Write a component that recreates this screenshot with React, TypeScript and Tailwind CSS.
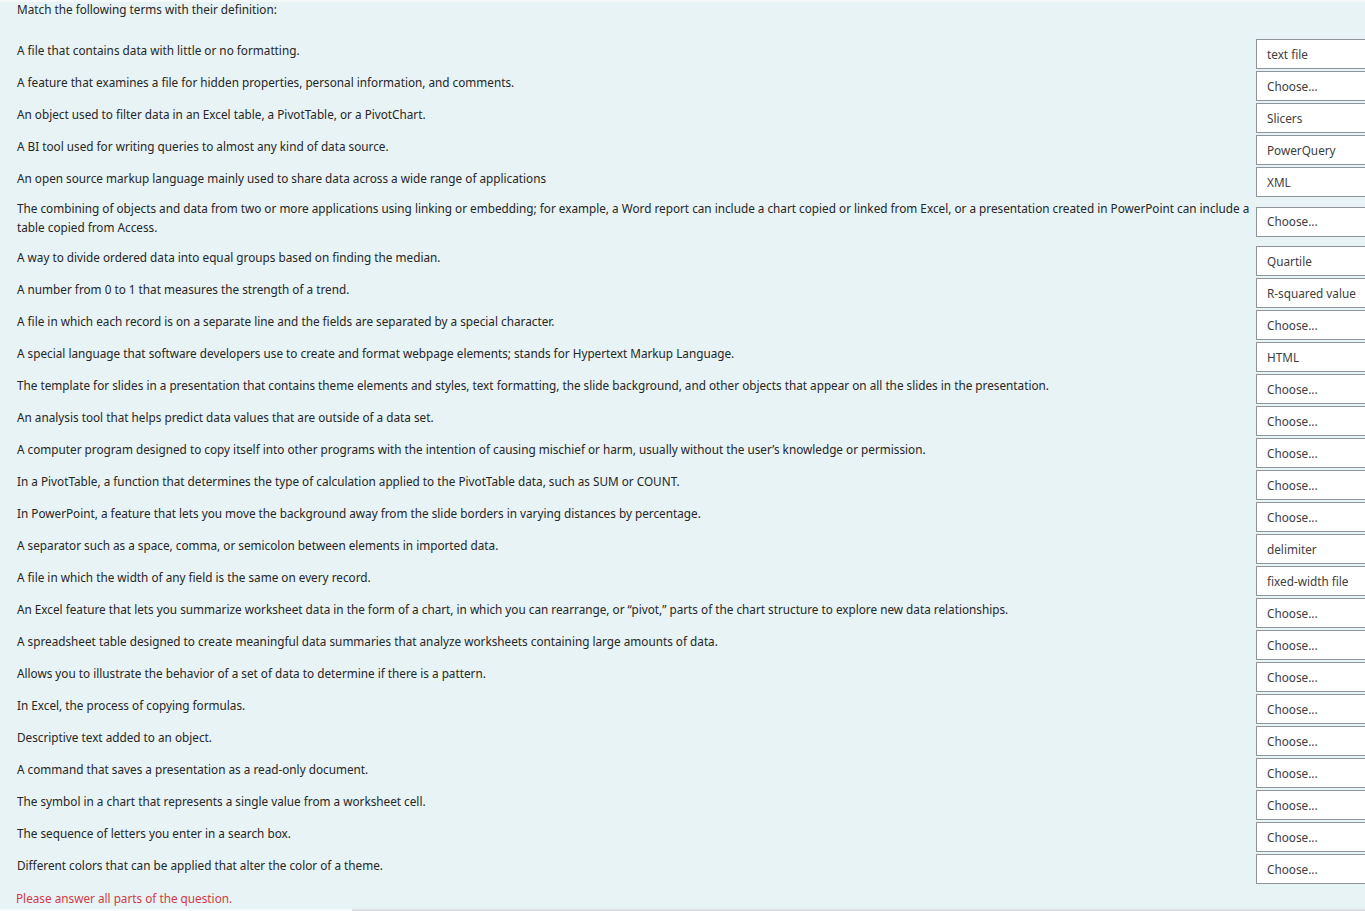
import React from 'react';

type Row = { text: string; answer: string };

const rows: Row[] = [
  { text: 'A file that contains data with little or no formatting.', answer: 'text file' },
  { text: 'A feature that examines a file for hidden properties, personal information, and comments.', answer: 'Choose...' },
  { text: 'An object used to filter data in an Excel table, a PivotTable, or a PivotChart.', answer: 'Slicers' },
  { text: 'A BI tool used for writing queries to almost any kind of data source.', answer: 'PowerQuery' },
  { text: 'An open source markup language mainly used to share data across a wide range of applications', answer: 'XML' },
  {
    text: 'The combining of objects and data from two or more applications using linking or embedding; for example, a Word report can include a chart copied or linked from Excel, or a presentation created in PowerPoint can include a table copied from Access.',
    answer: 'Choose...',
  },
  { text: 'A way to divide ordered data into equal groups based on finding the median.', answer: 'Quartile' },
  { text: 'A number from 0 to 1 that measures the strength of a trend.', answer: 'R-squared value' },
  { text: 'A file in which each record is on a separate line and the fields are separated by a special character.', answer: 'Choose...' },
  { text: 'A special language that software developers use to create and format webpage elements; stands for Hypertext Markup Language.', answer: 'HTML' },
  { text: 'The template for slides in a presentation that contains theme elements and styles, text formatting, the slide background, and other objects that appear on all the slides in the presentation.', answer: 'Choose...' },
  { text: 'An analysis tool that helps predict data values that are outside of a data set.', answer: 'Choose...' },
  { text: 'A computer program designed to copy itself into other programs with the intention of causing mischief or harm, usually without the user\u2019s knowledge or permission.', answer: 'Choose...' },
  { text: 'In a PivotTable, a function that determines the type of calculation applied to the PivotTable data, such as SUM or COUNT.', answer: 'Choose...' },
  { text: 'In PowerPoint, a feature that lets you move the background away from the slide borders in varying distances by percentage.', answer: 'Choose...' },
  { text: 'A separator such as a space, comma, or semicolon between elements in imported data.', answer: 'delimiter' },
  { text: 'A file in which the width of any field is the same on every record.', answer: 'fixed-width file' },
  { text: 'An Excel feature that lets you summarize worksheet data in the form of a chart, in which you can rearrange, or \u201cpivot,\u201d parts of the chart structure to explore new data relationships.', answer: 'Choose...' },
  { text: 'A spreadsheet table designed to create meaningful data summaries that analyze worksheets containing large amounts of data.', answer: 'Choose...' },
  { text: 'Allows you to illustrate the behavior of a set of data to determine if there is a pattern.', answer: 'Choose...' },
  { text: 'In Excel, the process of copying formulas.', answer: 'Choose...' },
  { text: 'Descriptive text added to an object.', answer: 'Choose...' },
  { text: 'A command that saves a presentation as a read-only document.', answer: 'Choose...' },
  { text: 'The symbol in a chart that represents a single value from a worksheet cell.', answer: 'Choose...' },
  { text: 'The sequence of letters you enter in a search box.', answer: 'Choose...' },
  { text: 'Different colors that can be applied that alter the color of a theme.', answer: 'Choose...' },
];

const App: React.FC = () => {
  return (
    <div
      className="w-[1365px] h-[911px] overflow-hidden bg-[#e7f3f5] text-[11.75px] leading-[19px] text-[#262626] flex flex-col"
      style={{ fontFamily: '"Noto Sans", "Open Sans", sans-serif' }}
    >
      <div className="h-[2px] bg-[#f4f9fa] shrink-0" />
      <div className="flex-1 pl-[17px]">
        <p className="-mt-[2px]">Match the following terms with their definition:</p>

        <div className="mt-[19px] flex flex-col">
          {rows.map((row, i) => (
            <div key={i} className="flex items-center">
              <div className="flex-1 pt-px pb-[8px] pr-[6px]">{row.text}</div>
              <div className="w-[120px] -mr-[11px] shrink-0 h-[30px] my-px bg-white border border-[#8e9499] flex items-center pl-[10px] text-[#404040]">
                {row.answer}
              </div>
            </div>
          ))}
        </div>

        <p className="mt-[4px] -ml-px text-[#d13a45]">Please answer all parts of the question.</p>
      </div>
      <div className="h-[2px] shrink-0 flex">
        <div className="w-[352px] bg-[#f7f9fa]" />
        <div className="flex-1 bg-[#dcdfe1]" />
      </div>
    </div>
  );
};

export default App;
